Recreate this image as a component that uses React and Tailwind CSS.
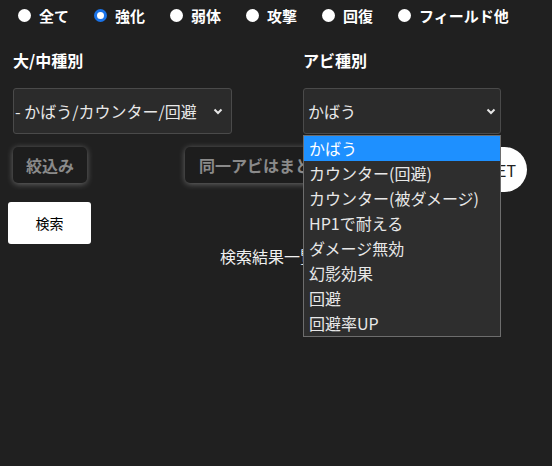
import React from "react";

const FONT = { fontFamily: '"Noto Sans CJK JP", "Noto Sans", sans-serif' };

const categories = ["全て", "強化", "弱体", "攻撃", "回復", "フィールド他"];
const options = [
  "かばう",
  "カウンター(回避)",
  "カウンター(被ダメージ)",
  "HP1で耐える",
  "ダメージ無効",
  "幻影効果",
  "回避",
  "回避率UP",
];

const Chevron = () => (
  <svg width="10" height="7" viewBox="0 0 10 7" className="shrink-0">
    <path d="M1.5 1.5 L5 5 L8.5 1.5" fill="none" stroke="#e5e5e5" strokeWidth="2" />
  </svg>
);

const Radio = ({ checked }) =>
  checked ? (
    <span className="w-[13px] h-[13px] rounded-full bg-white border-[3px] border-[#1a73e8] shrink-0" />
  ) : (
    <span className="w-[13px] h-[13px] rounded-full bg-white shrink-0" />
  );

export default function App() {
  return (
    <div className="w-[552px] h-[466px] bg-[#202020] text-white overflow-hidden" style={FONT}>
      {/* category radios */}
      <div className="h-[30px] flex items-center pl-[18px] gap-[25px]">
        {categories.map((c, i) => (
          <label key={c} className="flex items-center gap-[8px] text-[15px] font-bold leading-none">
            <Radio checked={i === 1} />
            {c}
          </label>
        ))}
      </div>

      {/* selectors */}
      <div className="flex mt-[18px]">
        <div className="pl-[13px] w-[303px]">
          <div className="h-6 text-[16px] font-bold leading-6">大/中種別</div>
          <div className="mt-4 w-[219px] h-[46px] bg-[#2b2b2b] border border-[#4a4a4a] rounded-[3px] flex items-center justify-between pl-[1px] pr-[8px]">
            <span className="text-[16px] text-[#e8e8e8] whitespace-nowrap">- かばう/カウンター/回避</span>
            <Chevron />
          </div>
        </div>
        <div className="relative z-10">
          <div className="h-6 text-[16px] font-bold leading-6">アビ種別</div>
          <div className="mt-4 w-[198px] h-[46px] bg-[#2b2b2b] border border-[#4a4a4a] rounded-[3px] flex items-center justify-between pl-[4px] pr-[4px]">
            <span className="text-[16px] text-[#e8e8e8]">かばう</span>
            <Chevron />
          </div>
          <ul className="absolute left-0 top-[87px] w-[198px] bg-[#2e2e2e] border border-[#6d6d6d]">
            {options.map((o, i) => (
              <li
                key={o}
                className={
                  "h-[25px] leading-[25px] pl-[5px] text-[16px] whitespace-nowrap " +
                  (i === 0 ? "bg-[#1e90ff] text-white" : "text-[#e8e8e8]")
                }
              >
                {o}
              </li>
            ))}
          </ul>
        </div>
      </div>

      {/* buttons row */}
      <div className="flex items-start mt-[13px] pl-[13px]">
        <button className="w-[74px] h-[36px] rounded-[5px] bg-[#1d1d1d] text-[#8a8a8a] text-[16px] font-bold shadow-[0_1px_6px_rgba(200,200,200,0.45)]">
          絞込み
        </button>
        <button className="ml-[98px] h-[36px] px-[14px] rounded-[5px] bg-[#1d1d1d] text-[#8a8a8a] text-[16px] font-bold whitespace-nowrap shadow-[0_1px_6px_rgba(200,200,200,0.45)]">
          同一アビはまとめる
        </button>
        <button className="ml-auto mr-[25px] w-[70px] h-[45px] rounded-full bg-white text-[#222] text-[16px]">
          RESET
        </button>
      </div>

      {/* search */}
      <div className="pl-[8px] mt-[10px]">
        <button className="w-[83px] h-[42px] bg-white text-black text-[14px] rounded-[3px]">検索</button>
      </div>
      <div className="text-center text-[16px] leading-6 text-[#f0f0f0]">検索結果一覧：</div>
    </div>
  );
}
